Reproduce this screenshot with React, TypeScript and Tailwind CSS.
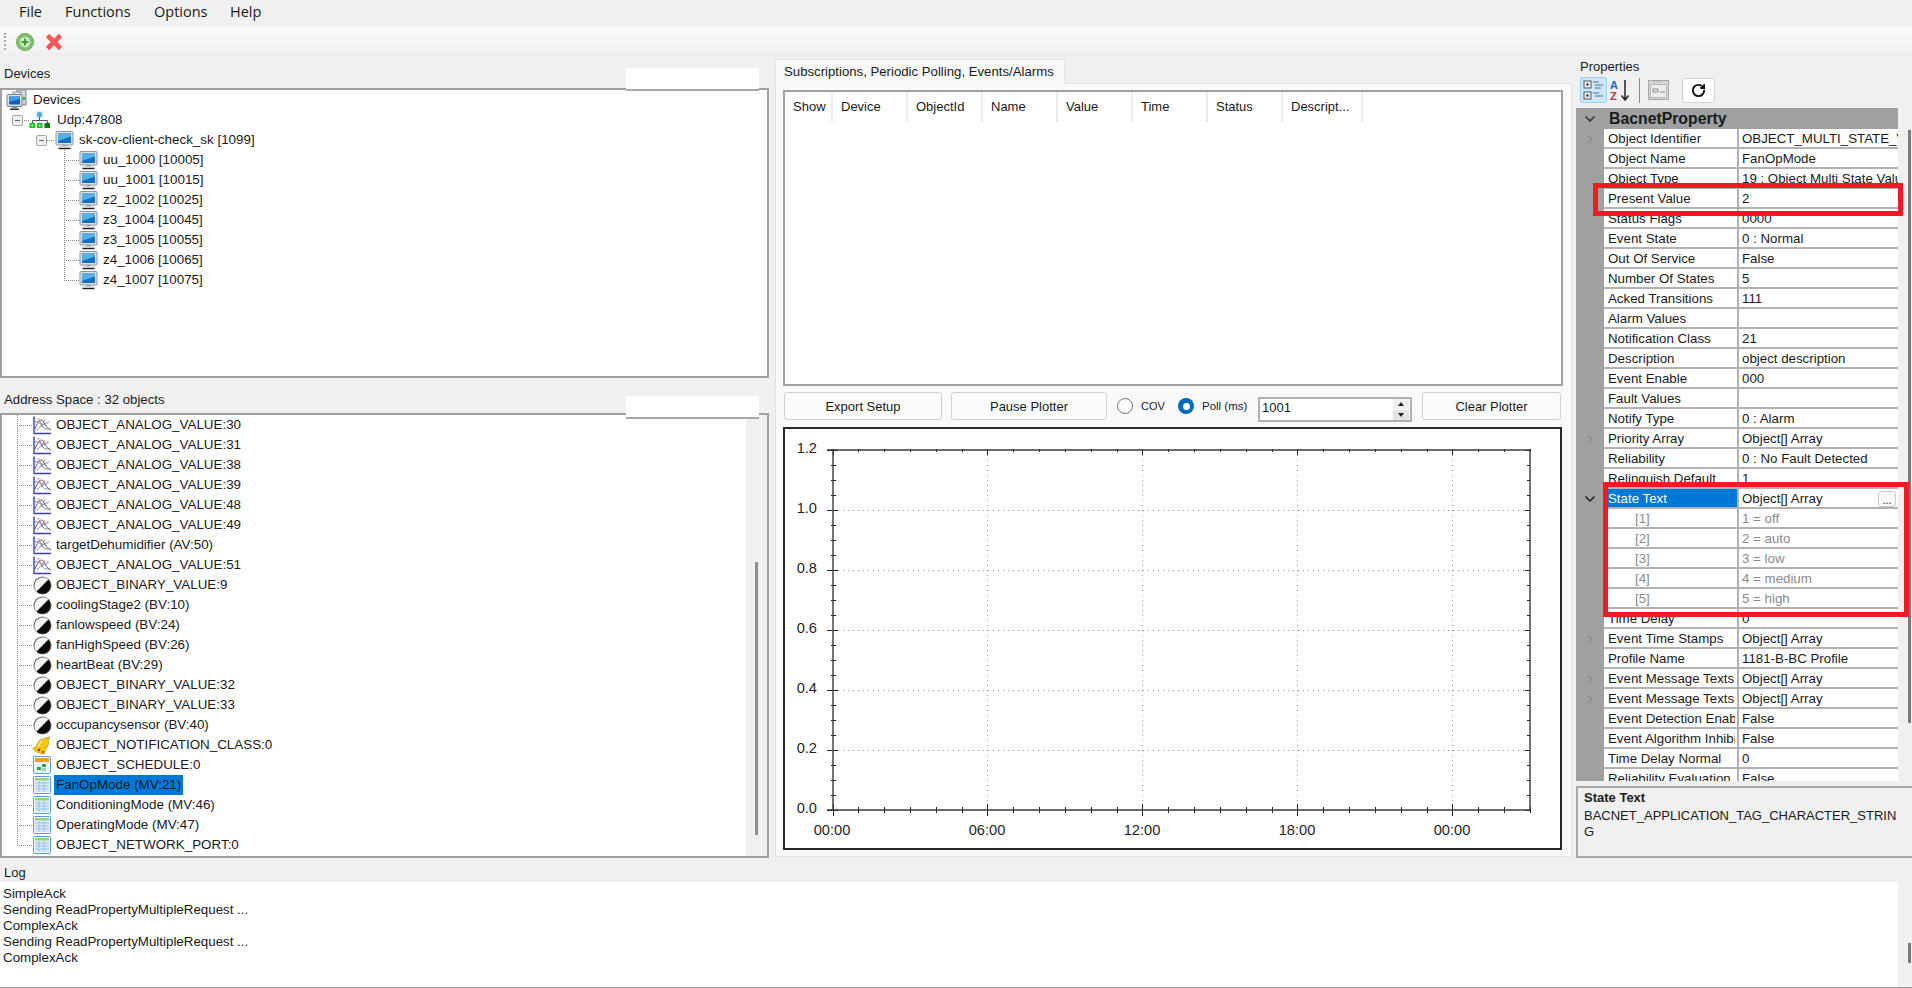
import React from "react";
import { RotateCw, ChevronRight, ChevronDown } from "lucide-react";

function Monitor({ x = 0 }: { x?: number }) {
  return (
    <svg width="19" height="19" viewBox="0 0 19 19" className="shrink-0" style={{ marginLeft: x }}>
      <rect x="1" y="0.5" width="17" height="13.5" rx="1" fill="#dcdfe4" stroke="#8f959c" />
      <rect x="3" y="2.5" width="13" height="9.5" fill="#0f6fc6" />
      <path d="M3 2.5h13v3L3 10z" fill="#4fb1e6" />
      <rect x="7.5" y="14" width="4" height="1.5" fill="#9aa0a6" />
      <rect x="3.5" y="15.5" width="12" height="1.5" fill="#c4c8cc" />
      <rect x="3.5" y="17" width="12" height="1.2" fill="#1c1c1c" />
    </svg>
  );
}
function DevicesIcon() {
  return (
    <svg width="22" height="22" viewBox="0 0 22 22" className="shrink-0">
      <rect x="11" y="1" width="9" height="15" fill="#d3d6da" stroke="#7f858c" />
      <rect x="7" y="3" width="8" height="13" fill="#e2e4e7" stroke="#8f959c" />
      <rect x="17" y="8" width="2" height="3" fill="#2fb12f" />
      <rect x="1" y="5.5" width="15" height="12" rx="1" fill="#dcdfe4" stroke="#7d838a" />
      <rect x="3" y="7.5" width="11" height="8" fill="#0a5fc0" />
      <path d="M3 7.5h11v2.5L3 13z" fill="#3f9fe0" />
      <rect x="6" y="18" width="5" height="1.5" fill="#8f959c" />
      <rect x="4" y="19.5" width="9" height="1.5" fill="#30343a" />
    </svg>
  );
}
function NetIcon() {
  return (
    <svg width="22" height="18" viewBox="0 0 22 18" className="shrink-0">
      <rect x="8" y="1" width="5" height="5" fill="#3ea6ea" stroke="#a7d3f2" />
      <path d="M10.5 6v3M3.5 12V9.5h15V12" fill="none" stroke="#555" />
      <rect x="0.5" y="12" width="5.5" height="5" fill="#15c81d" />
      <rect x="8" y="12" width="5.5" height="5" fill="#15c81d" />
      <rect x="15.5" y="12" width="5.5" height="5" fill="#0f7a13" />
      <circle cx="3.2" cy="14.5" r="1" fill="#c6f5c8" />
      <circle cx="10.7" cy="14.5" r="1" fill="#c6f5c8" />
    </svg>
  );
}
function AnalogIcon() {
  return (
    <svg width="19" height="19" viewBox="0 0 19 19" className="shrink-0">
      <path d="M1 0.5V17.5H18" fill="none" stroke="#3a3fb8" strokeWidth="1.4" />
      <path d="M2 13C5 5 8 2.5 10 5c2 3 4 8 8 9" fill="none" stroke="#555a66" />
      <path d="M2 6c3-1 5 1 7 4s4 4 8 2" fill="none" stroke="#7c7f8a" />
      <path d="M5 2l4 7 3-5" fill="none" stroke="#b0546a" strokeWidth="0.8" />
      <path d="M4 14c3-4 6-5 12-8" fill="none" stroke="#3a70c8" strokeWidth="0.8" />
    </svg>
  );
}
function BinaryIcon() {
  return (
    <svg width="19" height="19" viewBox="0 0 19 19" className="shrink-0">
      <circle cx="9.5" cy="9.5" r="8.8" fill="#0a0a0a" />
      <path d="M3.3 15.7A8.8 8.8 0 0 1 15.7 3.3z" fill="#f4f4f4" />
      <circle cx="9.5" cy="9.5" r="8.6" fill="none" stroke="#9b9b9b" strokeWidth="0.6" />
    </svg>
  );
}
function BellIcon() {
  return (
    <svg width="20" height="20" viewBox="0 0 20 20" className="shrink-0">
      <path d="M18.5 0.5l-1 4-2-1z" fill="#b99a20" />
      <path d="M15 2.5c-2 1-3 1-5 1.5C7 5 6 7.5 4.5 10 3.5 12 2 13 0.5 13.5c2.5 3 8 6 12 5.5.5-2.5 1-4 2.5-6.5s2.5-5 1.5-7c-.3-1-.6-2-1.5-3.5z" fill="#f3c614" stroke="#b5890a" strokeWidth="0.6" />
      <circle cx="7" cy="15" r="1.3" fill="#b1300f" />
      <circle cx="11" cy="17" r="1.1" fill="#b1300f" />
      <path d="M10 6c-2 2-3 4-4 6" stroke="#fbe98a" strokeWidth="1.4" fill="none" />
    </svg>
  );
}
function ScheduleIcon() {
  return (
    <svg width="18" height="18" viewBox="0 0 18 18" className="shrink-0">
      <rect x="0.5" y="0.5" width="17" height="17" rx="1" fill="#eef5fb" stroke="#5b9bd5" />
      <rect x="2" y="2" width="14" height="4" fill="#f49a1e" />
      <rect x="9" y="8" width="4" height="3" fill="#23a638" />
      <rect x="4" y="11" width="4" height="3" fill="#23a638" />
      <rect x="9" y="12" width="4" height="3" fill="#9fd3a8" />
    </svg>
  );
}
function MultiIcon() {
  return (
    <svg width="18" height="18" viewBox="0 0 18 18" className="shrink-0">
      <rect x="0.5" y="0.5" width="17" height="17" rx="1" fill="#f2f8fd" stroke="#5b9bd5" />
      <rect x="2" y="2" width="14" height="2.5" fill="#8fd27d" />
      <path d="M2 7h14M2 10h14M2 13h14M6 5v11M11 5v11" stroke="#9cc5e8" fill="none" />
      <rect x="2" y="5" width="14" height="11" fill="#7fb4e3" opacity="0.18" />
    </svg>
  );
}

function Dots({ w, h, kind }: { w: number; h: number; kind: "T" | "L" | "H" | "V" }) {
  const mid = Math.floor(h / 2) + 0.5;
  const dash = { stroke: "#8a8a8a", strokeDasharray: "1 1", fill: "none" } as const;
  return (
    <svg width={w} height={h} className="shrink-0">
      {kind !== "H" && <path d={`M0.5 0V${kind === "L" ? mid : h}`} {...dash} />}
      {kind !== "V" && <path d={`M0 ${mid}H${w}`} {...dash} />}
    </svg>
  );
}

function Minus() {
  return (
    <span className="flex h-[11px] w-[11px] shrink-0 items-center justify-center rounded-[2px] border border-[#a5a5a5] bg-[#f1f1f1]">
      <span className="h-px w-[5px] bg-[#5a6a85]" />
    </span>
  );
}

const devices = [
  "uu_1000 [10005]",
  "uu_1001 [10015]",
  "z2_1002 [10025]",
  "z3_1004 [10045]",
  "z3_1005 [10055]",
  "z4_1006 [10065]",
  "z4_1007 [10075]",
];

type Kind = "a" | "b" | "n" | "s" | "m";
const objects: [string, Kind][] = [
  ["OBJECT_ANALOG_VALUE:30", "a"],
  ["OBJECT_ANALOG_VALUE:31", "a"],
  ["OBJECT_ANALOG_VALUE:38", "a"],
  ["OBJECT_ANALOG_VALUE:39", "a"],
  ["OBJECT_ANALOG_VALUE:48", "a"],
  ["OBJECT_ANALOG_VALUE:49", "a"],
  ["targetDehumidifier (AV:50)", "a"],
  ["OBJECT_ANALOG_VALUE:51", "a"],
  ["OBJECT_BINARY_VALUE:9", "b"],
  ["coolingStage2 (BV:10)", "b"],
  ["fanlowspeed (BV:24)", "b"],
  ["fanHighSpeed (BV:26)", "b"],
  ["heartBeat (BV:29)", "b"],
  ["OBJECT_BINARY_VALUE:32", "b"],
  ["OBJECT_BINARY_VALUE:33", "b"],
  ["occupancysensor (BV:40)", "b"],
  ["OBJECT_NOTIFICATION_CLASS:0", "n"],
  ["OBJECT_SCHEDULE:0", "s"],
  ["FanOpMode (MV:21)", "m"],
  ["ConditioningMode (MV:46)", "m"],
  ["OperatingMode (MV:47)", "m"],
  ["OBJECT_NETWORK_PORT:0", "m"],
];

function ObjIcon({ k }: { k: Kind }) {
  if (k === "a") return <AnalogIcon />;
  if (k === "b") return <BinaryIcon />;
  if (k === "n") return <BellIcon />;
  if (k === "s") return <ScheduleIcon />;
  return <MultiIcon />;
}

function SearchBox({ overlap }: { overlap: string }) {
  return <div className={"relative z-10 mr-[10px] h-[23px] w-[133px] rounded-[1px] border-b-2 border-[#a8a8a8] bg-white " + overlap} />;
}

function DeviceTree() {
  return (
    <div className="h-[290px] overflow-hidden border-2 border-[#a0a0a0] bg-white pl-[4px] text-[13.4px] leading-[20px] text-[#1a1a1a]">
      <div className="flex h-[20px] items-center gap-[5px]">
        <DevicesIcon />
        <span>Devices</span>
      </div>
      <div className="flex h-[20px] items-center">
        <span className="ml-[6px]"><Minus /></span>
        <span className="ml-px"><Dots w={5} h={20} kind="H" /></span>
        <NetIcon />
        <span className="ml-[6px]">Udp:47808</span>
      </div>
      <div className="flex h-[20px] items-center pl-[30px]">
        <Minus />
        <Dots w={8} h={20} kind="H" />
        <Monitor />
        <span className="ml-[5px]">sk-cov-client-check_sk [1099]</span>
      </div>
      {devices.map((d, i) => (
        <div key={d} className="flex h-[20px] items-center pl-[58px]">
          <Dots w={15} h={20} kind={i === devices.length - 1 ? "L" : "T"} />
          <Monitor />
          <span className="ml-[5px]">{d}</span>
        </div>
      ))}
    </div>
  );
}

function ObjectTree() {
  return (
    <div className="flex h-[445px] overflow-hidden border-2 border-[#a0a0a0] bg-white text-[13.4px] text-[#1a1a1a]">
      <div className="flex-1 pl-[15px]">
        {objects.map(([name, k], i) => (
          <div key={name} className="flex h-[20px] items-center">
            <Dots w={15} h={20} kind={i === objects.length - 1 ? "L" : "T"} />
            <span className="flex w-[20px] justify-center"><ObjIcon k={k} /></span>
            <span
              className={
                "ml-[2px] flex h-[20px] items-center px-[2px] leading-[20px] " +
                (name.startsWith("FanOp") ? "bg-[#0078d7]" : "")
              }
            >
              {name}
            </span>
          </div>
        ))}
      </div>
      <div className="flex w-[21px] shrink-0 justify-center bg-[#f0f0f0] pt-[147px]">
        <div className="h-[273px] w-[3px] bg-[#8f8f8f]" />
      </div>
    </div>
  );
}

function Btn({ children, w }: { children: React.ReactNode; w: string }) {
  return (
    <div className={"flex h-[28px] items-center justify-center rounded-[3px] border border-[#d0d0d0] bg-[#fbfbfb] pt-[1px] " + w}>
      {children}
    </div>
  );
}

function Chart() {
  const xMajor = [987, 1142, 1297, 1452];
  const xLabels: [number, string][] = [
    [832, "00:00"],
    [987, "06:00"],
    [1142, "12:00"],
    [1297, "18:00"],
    [1452, "00:00"],
  ];
  const yLabels: [number, string][] = [
    [450, "1.2"],
    [510, "1.0"],
    [570, "0.8"],
    [630, "0.6"],
    [690, "0.4"],
    [750, "0.2"],
    [810, "0.0"],
  ];
  const xTicks: number[] = [];
  for (let i = 0; i <= 27; i++) xTicks.push(832.5 + i * 25.83);
  const yTicks: number[] = [];
  for (let i = 0; i <= 24; i++) yTicks.push(450 + i * 15);
  return (
    <svg width="775" height="419" viewBox="785 429 775 419" className="block bg-white">
      {xMajor.map((x) => (
        <path key={x} d={`M${x + 0.5} 450V810`} stroke="#9a9a9a" strokeDasharray="1 4" fill="none" />
      ))}
      {yLabels.slice(1, 6).map(([y]) => (
        <path key={y} d={`M833 ${y + 0.5}H1530`} stroke="#9a9a9a" strokeDasharray="1 4" fill="none" />
      ))}
      {xTicks.map((x, i) => {
        const major = i % 6 === 0;
        const px = Math.round(x) + 0.5;
        return (
          <g key={x} stroke="#222" fill="none">
            <path d={major ? `M${px} 804V816` : `M${px} 807V813`} />
            <path d={`M${px} 449V${major ? 455 : 452}`} />
          </g>
        );
      })}
      {yTicks.map((y, i) => {
        const major = i % 4 === 0;
        return (
          <g key={y} stroke="#222" fill="none">
            <path d={major ? `M827 ${y + 0.5}H838` : `M831 ${y + 0.5}H836`} />
            <path d={major ? `M1525 ${y + 0.5}H1530` : `M1527 ${y + 0.5}H1530`} />
          </g>
        );
      })}
      <path d="M833 450H1530V810H833Z" fill="none" stroke="#3a3a3a" strokeWidth="1.4" />
      <path d="M827 810H833M827 450H833" stroke="#3a3a3a" strokeWidth="1.4" />
      {yLabels.map(([y, t]) => (
        <text key={t} x="817" y={y + 3} textAnchor="end" fontSize="14.67" fill="#1f1f1f" fontFamily="'Liberation Sans', sans-serif">
          {t}
        </text>
      ))}
      {xLabels.map(([x, t], i) => (
        <text key={i} x={x} y="835" textAnchor="middle" fontSize="14.67" fill="#1f1f1f" fontFamily="'Liberation Sans', sans-serif">
          {t}
        </text>
      ))}
    </svg>
  );
}

type Row = { n: string; v?: string; exp?: boolean; open?: boolean; sel?: boolean; child?: boolean; btn?: boolean };
const props: Row[] = [
  { n: "Object Identifier", v: "OBJECT_MULTI_STATE_VALUE:21", exp: true },
  { n: "Object Name", v: "FanOpMode" },
  { n: "Object Type", v: "19 : Object Multi State Value" },
  { n: "Present Value", v: "2" },
  { n: "Status Flags", v: "0000" },
  { n: "Event State", v: "0 : Normal" },
  { n: "Out Of Service", v: "False" },
  { n: "Number Of States", v: "5" },
  { n: "Acked Transitions", v: "111" },
  { n: "Alarm Values", v: "" },
  { n: "Notification Class", v: "21" },
  { n: "Description", v: "object description" },
  { n: "Event Enable", v: "000" },
  { n: "Fault Values", v: "" },
  { n: "Notify Type", v: "0 : Alarm" },
  { n: "Priority Array", v: "Object[] Array", exp: true },
  { n: "Reliability", v: "0 : No Fault Detected" },
  { n: "Relinquish Default", v: "1" },
  { n: "State Text", v: "Object[] Array", open: true, sel: true, btn: true },
  { n: "[1]", v: "1 = off", child: true },
  { n: "[2]", v: "2 = auto", child: true },
  { n: "[3]", v: "3 = low", child: true },
  { n: "[4]", v: "4 = medium", child: true },
  { n: "[5]", v: "5 = high", child: true },
  { n: "Time Delay", v: "0" },
  { n: "Event Time Stamps", v: "Object[] Array", exp: true },
  { n: "Profile Name", v: "1181-B-BC Profile" },
  { n: "Event Message Texts", v: "Object[] Array", exp: true },
  { n: "Event Message Texts Config", v: "Object[] Array", exp: true },
  { n: "Event Detection Enable", v: "False" },
  { n: "Event Algorithm Inhibit", v: "False" },
  { n: "Time Delay Normal", v: "0" },
  { n: "Reliability Evaluation Inhibit", v: "False" },
];

function PropRow({ r }: { r: Row }) {
  const line = "border-b-2 border-[#b2b2b2]";
  return (
    <div className="flex h-[20px]">
      <div className="flex w-[28px] shrink-0 items-center justify-center bg-[#a0a0a0]">
        {r.exp && <ChevronRight size={14} strokeWidth={2} className="text-[#8c8c8c]" />}
        {r.open && <ChevronDown size={16} strokeWidth={2.5} className="text-[#222]" />}
      </div>
      <div className={"flex w-[135px] shrink-0 items-start overflow-hidden whitespace-nowrap border-r-2 border-[#b2b2b2] bg-white " + line + (r.child ? " pl-[31px]" : " pl-[4px]") + (r.sel ? "" : " pr-[2px]")}>
        <span className={"flex h-[19px] w-full items-center overflow-hidden pt-[1px] " + (r.sel ? "bg-[#0078d7] text-white" : r.child ? "text-[#8a8a8a]" : "")}>{r.n}</span>
      </div>
      <div className={"flex min-w-0 flex-1 items-start overflow-hidden whitespace-nowrap bg-white pl-[3px] " + line + (r.child ? " text-[#8a8a8a]" : "")}>
        <span className="flex h-[19px] flex-1 items-center overflow-hidden pt-[1px]">{r.v}</span>
        {r.btn && (
          <span className="mr-[2px] mt-[2px] flex h-[16px] w-[18px] shrink-0 items-end justify-center rounded-[3px] border border-[#c8c8c8] bg-[#f8f8f8] pb-[1px] text-[11px] leading-[10px]">...</span>
        )}
      </div>
    </div>
  );
}

function Properties() {
  return (
    <div className="flex w-[336px] shrink-0 flex-col">
      <div className="h-[23px] pl-[4px] pt-[5px] text-[13px] leading-[16px] text-[#1a1a1a]">Properties</div>
      <div className="flex h-[27px] items-center pl-[4px]">
        <div className="flex h-[26px] w-[27px] items-center justify-center rounded-[2px] border border-[#99d1ff] bg-[#cce8ff]">
          <svg width="22" height="22" viewBox="0 0 22 22">
            <rect x="1" y="2" width="7" height="7" fill="#eee" stroke="#555" />
            <rect x="3.5" y="4.5" width="2" height="2" fill="#111" />
            <rect x="1" y="13" width="7" height="7" fill="#eee" stroke="#555" />
            <rect x="3.5" y="15.5" width="2" height="2" fill="#111" />
            <path d="M10 3h6M12 6h8M12 9h6M10 14h6M12 17h8" stroke="#5a6a7a" fill="none" />
          </svg>
        </div>
        <svg width="22" height="24" viewBox="0 0 22 24" className="ml-[3px]">
          <text x="0" y="11" fontSize="11" fontWeight="700" fill="#2a63c8" fontFamily="'Liberation Sans', sans-serif">A</text>
          <text x="0" y="22" fontSize="11" fontWeight="700" fill="#a8414a" fontFamily="'Liberation Sans', sans-serif">Z</text>
          <path d="M15 2V21M11.5 17.5L15 22l3.5-4.5" fill="none" stroke="#222" strokeWidth="1.5" />
        </svg>
        <div className="ml-[7px] h-[25px] w-px bg-[#8a8a8a]" />
        <svg width="21" height="20" viewBox="0 0 21 20" className="ml-[8px]">
          <rect x="0.5" y="0.5" width="20" height="19" fill="#d8d8d8" stroke="#a6a6a6" />
          <rect x="2.5" y="4.5" width="16" height="13" fill="#ececec" stroke="#b8b8b8" />
          <path d="M6 1.5h1M9 1.5h1M12 1.5h1M5 9h5v3H5zM12 12h5" stroke="#8a8a8a" fill="none" />
        </svg>
        <div className="ml-[13px] flex h-[25px] w-[33px] items-center justify-center rounded-[3px] border border-[#d5d5d5] bg-white">
          <RotateCw size={15} strokeWidth={3} className="text-[#111]" />
        </div>
      </div>
      <div className="relative mt-[4px] flex h-[674px] overflow-hidden">
        <div className="w-[322px] shrink-0 text-[13.3px] leading-[18px] text-[#1a1a1a]">
          <div className="flex h-[21px] items-center bg-[#a0a0a0] pt-[1px] font-bold">
            <span className="flex w-[28px] justify-center"><ChevronDown size={16} strokeWidth={2.5} className="text-[#333]" /></span>
            <span className="ml-[5px] text-[15.8px]">BacnetProperty</span>
          </div>
          {props.map((r) => (
            <PropRow key={r.n} r={r} />
          ))}
        </div>
        <div className="flex flex-1 justify-end bg-[#f0f0f0] pt-[22px] pr-[1px]">
          <div className="h-[593px] w-[3px] bg-[#7a7a7a]" />
        </div>
        <div className="absolute left-[17px] top-[75px] h-[33px] w-[310px] border-[5px] border-[#ed1c24]" />
        <div className="absolute left-[27px] top-[374px] h-[135px] w-[306px] border-[5px] border-[#ed1c24]" />
      </div>
      <div className="mt-[5px] h-[72px] border-2 border-r-0 border-[#a8a8a8] pl-[6px] text-[13px] leading-[16px] text-[#1a1a1a]">
        <div className="mt-[2px] font-bold">State Text</div>
        <div className="mt-[2px] w-[322px] break-all">BACNET_APPLICATION_TAG_CHARACTER_STRING</div>
      </div>
    </div>
  );
}

export default function App() {
  const sans = "font-['Liberation_Sans',Arial,sans-serif]";
  return (
    <div className={"flex h-screen w-screen flex-col overflow-hidden bg-[#f0f0f0] " + sans}>
      <div className="flex h-[27px] items-center pb-[4px] pl-[19px] font-['Open_Sans',sans-serif] text-[14.5px] leading-[20px] text-[#1a1a1a]">
        <span className="w-[46px]">File</span>
        <span className="w-[89px]">Functions</span>
        <span className="w-[76px]">Options</span>
        <span>Help</span>
      </div>
      <div className="flex h-[27px] items-center bg-gradient-to-b from-[#fafafa] to-[#f0f0f0] pl-[4px] pt-[2px]">
        <div className="h-[17px] w-[2px] border-l-2 border-dotted border-[#a8a8a8]" />
        <svg width="18" height="18" viewBox="0 0 18 18" className="ml-[10px]">
          <circle cx="9" cy="9" r="8.5" fill="#7fbf6a" stroke="#6aa85a" />
          <circle cx="9" cy="9" r="5.2" fill="#d3e8cc" />
          <path d="M9 5.5v7M5.5 9h7" stroke="#3d9a4a" strokeWidth="2" />
        </svg>
        <svg width="18" height="18" viewBox="0 0 18 18" className="ml-[11px]">
          <path d="M2.5 2.5L15.5 15.5M15.5 2.5L2.5 15.5" stroke="#f25a5a" strokeWidth="4.6" />
        </svg>
      </div>
      <div className="flex h-[804px] shrink-0">
        <div className="flex w-[769px] shrink-0 flex-col text-[13px] text-[#1a1a1a]">
          <div className="flex h-[34px] items-end justify-between">
            <span className="pb-[6px] pl-[4px] leading-[16px]">Devices</span>
            <SearchBox overlap="-mb-[3px]" />
          </div>
          <DeviceTree />
          <div className="flex h-[35px] items-end justify-between">
            <span className="pb-[5px] pl-[4px] text-[13.2px] leading-[16px]">Address Space : 32 objects</span>
            <SearchBox overlap="-mb-[6px]" />
          </div>
          <ObjectTree />
        </div>
        <div className="ml-[6px] flex w-[797px] shrink-0 flex-col pt-[5px] text-[13px] text-[#1a1a1a]">
          <div className="relative z-10 -mb-px flex h-[25px] w-[290px] items-center whitespace-nowrap border border-b-0 border-[#e2e2e2] bg-[#f9f9f9] pl-[8px] text-[13.2px]">
            Subscriptions, Periodic Polling, Events/Alarms
          </div>
          <div className="flex h-[774px] flex-col border border-[#e2e2e2] bg-[#f9f9f9] pl-[7px] pr-[8px] pt-[6px]">
            <div className="h-[296px] border-2 border-[#a0a0a0] bg-white">
              <div className="flex h-[30px] items-center">
                <span className="flex h-[30px] w-[48px] items-center border-r-2 border-[#ececec] pl-[8px]">Show</span>
                {["Device", "ObjectId", "Name", "Value", "Time", "Status"].map((h) => (
                  <span key={h} className="flex h-[30px] w-[75px] items-center border-r-2 border-[#ececec] pl-[8px]">
                    {h}
                  </span>
                ))}
                <span className="flex h-[30px] w-[80px] items-center border-r-2 border-[#ececec] pl-[8px]">Descript...</span>
              </div>
            </div>
            <div className="mt-[6px] flex h-[30px] items-start">
              <Btn w="ml-px w-[158px]">Export Setup</Btn>
              <Btn w="ml-[9px] w-[156px]">Pause Plotter</Btn>
              <span className="ml-[10px] mt-[6px] h-[16px] w-[16px] shrink-0 rounded-full border border-[#767676] bg-white" />
              <span className="ml-[8px] mt-[6px] w-[24px] shrink-0 whitespace-nowrap text-[11px] leading-[16px]">COV</span>
              <span className="ml-[13px] mt-[6px] flex h-[16px] w-[16px] shrink-0 items-center justify-center rounded-full bg-[#0067c0]">
                <span className="h-[7px] w-[7px] rounded-full bg-white" />
              </span>
              <span className="ml-[8px] mt-[6px] w-[47px] shrink-0 whitespace-nowrap text-[11.5px] leading-[16px]">Poll (ms)</span>
              <div className="ml-[9px] mt-[5px] flex h-[25px] w-[154px] shrink-0 items-start justify-between border-2 border-[#b0b0b0] bg-white pl-[2px] text-[13px] leading-[17px]">
                <span>1001</span>
                <div className="mr-[1px] flex h-[21px] w-[16px] flex-col justify-between">
                  <div className="flex h-[10px] items-center justify-center bg-[#f0f0f0]"><span className="border-x-[3px] border-b-[4px] border-x-transparent border-b-[#222]" /></div>
                  <div className="flex h-[10px] items-center justify-center bg-[#e4e4e4]"><span className="border-x-[3px] border-t-[4px] border-x-transparent border-t-[#222]" /></div>
                </div>
              </div>
              <Btn w="ml-[10px] w-[139px]">Clear Plotter</Btn>
            </div>
            <div className="mt-[5px] h-[423px] w-[779px] border-2 border-[#2a2a2a] bg-white">
              <Chart />
            </div>
          </div>
        </div>
        <div className="ml-[4px]" />
        <Properties />
      </div>
      <div className="flex min-h-0 flex-1 flex-col border-b border-[#9a9a9a]">
        <div className="flex h-[24px] shrink-0 items-center pl-[4px] pt-[5px] text-[13px] text-[#1a1a1a]">Log</div>
        <div className="flex min-h-0 flex-1 bg-white">
          <div className="flex-1 pl-[3px] pt-[4px] text-[13.33px] leading-[16px] text-[#1a1a1a]">
            <div>SimpleAck</div>
            <div>Sending ReadPropertyMultipleRequest ...</div>
            <div>ComplexAck</div>
            <div>Sending ReadPropertyMultipleRequest ...</div>
            <div>ComplexAck</div>
          </div>
          <div className="flex w-[14px] justify-end bg-[#f0f0f0] pr-[1px] pt-[61px]">
            <div className="h-[20px] w-[3px] bg-[#7a7a7a]" />
          </div>
        </div>
      </div>
    </div>
  );
}
